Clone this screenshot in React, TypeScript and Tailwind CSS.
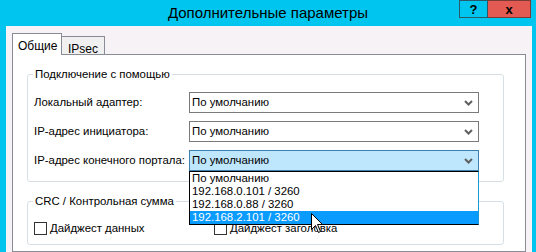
export default function App() {
  return (
    <div className="relative w-[536px] h-[252px] overflow-hidden bg-[#00c6ef] flex flex-col font-['Liberation_Sans',sans-serif] text-[11.4px] text-black">
      {/* Title bar */}
      <div className="h-[26px] grid grid-cols-[1fr_auto_1fr] shrink-0">
        <div />
        <div className="text-[15px] leading-[26px] pb-[2px]">Дополнительные параметры</div>
        <div className="flex justify-end items-start pr-[5px]">
          <div className="w-[29px] h-[18px] border border-[#2a5a6a] flex items-center justify-center font-bold text-[13px] leading-none">?</div>
          <div className="w-[43px] h-[18px] border border-l-0 border-[#7a3a36] bg-[#e25a52] flex items-center justify-center font-bold text-[13px] leading-none">x</div>
        </div>
      </div>

      {/* Window body */}
      <div className="flex-1 ml-[6px] mr-[4px] bg-[#f6f2f6] pt-[8px] pl-[6px] pr-[6px] flex flex-col">
        {/* Tabs */}
        <div className="flex items-end h-[20px] text-[12px]">
          <div className="relative z-10 w-[50px] h-[22px] -mb-px bg-white border border-b-0 border-[#898c95] pl-[5px] pt-[3px]">Общие</div>
          <div className="w-[43px] h-[18px] bg-[#f0f0f0] border border-l-0 border-b-0 border-[#898c95] pl-[6px] pt-[3px]">IPsec</div>
        </div>

        {/* Panel */}
        <div className="flex-1 bg-white border border-[#898c95] pl-[14px] pr-[21px] pt-[12px] flex flex-col">
          <fieldset className="border border-[#d5dfe5] rounded-[3px] pl-[6px] pr-[23px] pt-[11px] pb-[10px]">
            <legend className="-ml-[1px] px-[2px] leading-[14px]">Подключение с помощью</legend>
            <div className="flex flex-col gap-[8px]">
              <Row label="Локальный адаптер:" />
              <Row label="IP-адрес инициатора:" />
              <Row label="IP-адрес конечного портала:" active />
            </div>
          </fieldset>

          <fieldset className="mt-[12px] border border-[#d5dfe5] rounded-[3px] pl-[6px] pt-[12px] pb-[7px]">
            <legend className="-ml-[1px] px-[2px] leading-[14px]">CRC / Контрольная сумма</legend>
            <div className="flex">
              <Check label="Дайджест данных" className="w-[180px]" />
              <Check label="Дайджест заголовка" />
            </div>
          </fieldset>
        </div>
      </div>

      {/* Open dropdown list */}
      <div className="absolute left-[189px] top-[171px] w-[290px] bg-white border border-black border-r-[#1a9ad6] leading-[13px]">
        <div className="pl-[2px] h-[13px]">По умолчанию</div>
        <div className="pl-[2px] h-[13px]">192.168.0.101 / 3260</div>
        <div className="pl-[2px] h-[13px]">192.168.0.88 / 3260</div>
        <div className="pl-[2px] h-[13px] bg-[#0a9bff] text-white">192.168.2.101 / 3260</div>
      </div>

      {/* Mouse cursor */}
      <svg className="absolute left-[311px] top-[213px]" width="13" height="21" viewBox="0 0 13 21">
        <path d="M0.5 0.5 L0.5 16.5 L4.5 12.5 L7.5 19.5 L9.5 18.5 L6.5 11.5 L11.5 11.5 Z" fill="white" stroke="black" strokeWidth="1" />
      </svg>
    </div>
  );
}

function Row({ label, active }: { label: string; active?: boolean }) {
  return (
    <div className="flex items-center">
      <div className="w-[155px] shrink-0 whitespace-nowrap">{label}</div>
      <div
        className={
          active
            ? "w-[290px] h-[21px] shrink-0 border border-[#3c7fb1] bg-[#bee6fd] flex items-center justify-between pl-[2px] pr-[5px]"
            : "w-[290px] h-[21px] shrink-0 border border-[#7a7a7a] bg-white flex items-center justify-between pl-[2px] pr-[5px]"
        }
      >
        <span>По умолчанию</span>
        <svg width="9" height="6" viewBox="0 0 9 6">
          <path d="M1 1 L4.5 4.5 L8 1" fill="none" stroke="#606060" strokeWidth="2" />
        </svg>
      </div>
    </div>
  );
}

function Check({ label, className }: { label: string; className?: string }) {
  return (
    <div className={"flex items-center gap-[3px] " + (className ?? "")}>
      <div className="w-[13px] h-[13px] border border-[#333] bg-white" />
      <span>{label}</span>
    </div>
  );
}
